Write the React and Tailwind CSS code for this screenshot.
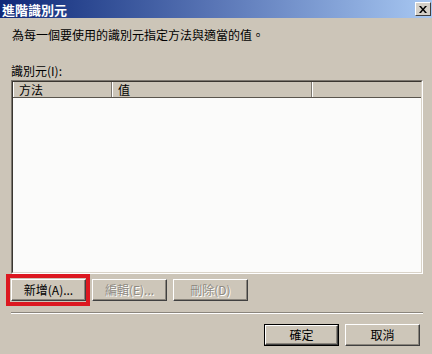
const font = { fontFamily: '"Noto Sans CJK TC", "Noto Sans", sans-serif' };

function Btn({ children, disabled, isDefault, className = "" }) {
  const face = (
    <div
      className={`h-full w-full flex items-center justify-center bg-[#cdc6b9] border border-t-white border-l-white border-r-[#404040] border-b-[#404040] shadow-[inset_-1px_-1px_0_#8a857c] text-[12px] leading-none ${
        disabled ? "text-[#8e8a82] [text-shadow:1px_1px_0_#ffffff]" : "text-black"
      }`}
    >
      {children}
    </div>
  );
  if (isDefault) {
    return <div className={`w-[75px] h-[22px] border border-black ${className}`}>{face}</div>;
  }
  return <div className={`w-[75px] h-[22px] ${className}`}>{face}</div>;
}

export default function App() {
  return (
    <div className="w-[432px] h-[354px] flex flex-col bg-[#ccc5b8] overflow-hidden select-none" style={font}>
      {/* title bar */}
      <div className="h-[18px] flex items-center justify-between bg-gradient-to-r from-[#102878] via-[#5a76b6] to-[#a8c8f2] pl-[2px] pr-px">
        <span className="text-white font-bold text-[13px] leading-none">進階識別元</span>
        <div className="w-[16px] h-[14px] bg-[#d4d0c8] border border-t-white border-l-white border-r-[#404040] border-b-[#404040] flex items-center justify-center">
          <svg width="8" height="7" viewBox="0 0 8 7">
            <path d="M0 0h2l2 2.5L6 0h2L5 3.5 8 7H6L4 4.5 2 7H0l3-3.5z" fill="#000" />
          </svg>
        </div>
      </div>

      <div className="flex flex-col px-[11px]">
        <p className="mt-[9px] pl-px text-[12px] leading-[16px] text-black">為每一個要使用的識別元指定方法與適當的值。</p>

        <div className="mt-[20px] h-[16px] text-[12px] leading-[16px] text-black">識別元(I):</div>

        {/* list view */}
        <div className="mt-px h-[194px] w-[412px] flex flex-col border border-t-[#7c776f] border-l-[#7c776f] border-r-white border-b-white">
          <div className="flex-1 flex flex-col border border-t-[#3a3630] border-l-[#3a3630] border-r-[#d9d3c8] border-b-[#d9d3c8] bg-[#fbfbfa]">
            <div className="h-[16px] flex bg-[#ccc5b8] border-b border-[#5a554d] text-[12px] leading-none text-black">
              <div className="w-[99px] flex items-center pl-[5px] border-l border-white border-r border-r-[#7c776f]">方法</div>
              <div className="w-[200px] flex items-center pl-[5px] border-l border-white border-r border-r-[#7c776f]">值</div>
              <div className="flex-1 border-l border-white"></div>
            </div>
          </div>
        </div>

        {/* action buttons */}
        <div className="mt-[5px] flex gap-[6px]">
          <div className="relative">
            <Btn>新增(A)...</Btn>
            <div className="absolute -left-[5px] -top-[5px] -right-[4px] -bottom-[5px] border-4 border-[#dc1820] pointer-events-none"></div>
          </div>
          <Btn disabled>編輯(E)...</Btn>
          <Btn disabled>刪除(D)</Btn>
        </div>

        {/* separator */}
        <div className="mt-[11px] w-[412px] border-t border-[#8a857c] border-b border-b-white"></div>

        <div className="mt-[10px] flex justify-end gap-[6px] pr-px">
          <Btn isDefault>確定</Btn>
          <Btn>取消</Btn>
        </div>
      </div>
    </div>
  );
}
